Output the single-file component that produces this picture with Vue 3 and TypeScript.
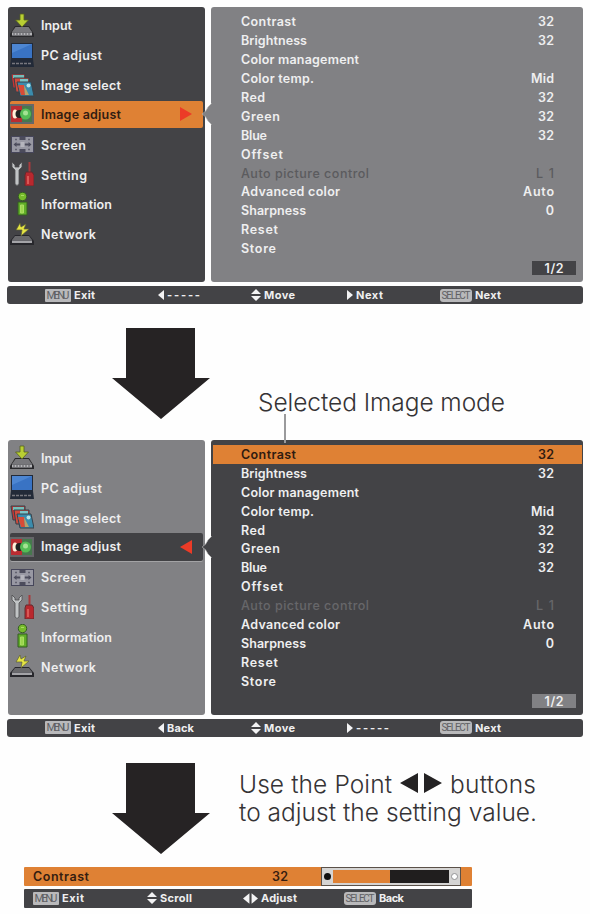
<script setup lang="ts">
import type { Directive } from 'vue'

interface MenuItem { id: string; label: string; width: number }
interface Setting { label: string; width: number; value?: string; valueWidth?: number; dim?: boolean }
interface Hint { keys: 'menu' | 'select' | 'left' | 'right' | 'updown' | 'leftright'; label: string; width: number }
interface Osd { id: string; activeSide: 'menu' | 'settings'; hints: Hint[] }

// Spreads a label's letters so that it fills its nominal width.
const fit = (el: HTMLElement, width: number) => {
  const count = (el.textContent ?? '').length
  el.style.letterSpacing = '0px'
  const natural = el.getBoundingClientRect().width
  const gap = (width - natural) / Math.max(count - 1, 1)
  el.style.letterSpacing = `${gap}px`
  el.style.marginRight = `${-gap}px`
}
const vFit: Directive<HTMLElement, number> = {
  mounted: (el, { value }) => fit(el, value),
}

const menu: MenuItem[] = [
  { id: 'input', label: 'Input', width: 31 },
  { id: 'pc', label: 'PC adjust', width: 61 },
  { id: 'select', label: 'Image select', width: 80 },
  { id: 'adjust', label: 'Image adjust', width: 80 },
  { id: 'screen', label: 'Screen', width: 45 },
  { id: 'setting', label: 'Setting', width: 46 },
  { id: 'info', label: 'Information', width: 71 },
  { id: 'network', label: 'Network', width: 55 },
]

const settings: Setting[] = [
  { label: 'Contrast', width: 55, value: '32', valueWidth: 16 },
  { label: 'Brightness', width: 66, value: '32', valueWidth: 16 },
  { label: 'Color management', width: 118 },
  { label: 'Color temp.', width: 73, value: 'Mid', valueWidth: 23 },
  { label: 'Red', width: 24, value: '32', valueWidth: 16 },
  { label: 'Green', width: 39, value: '32', valueWidth: 16 },
  { label: 'Blue', width: 26, value: '32', valueWidth: 16 },
  { label: 'Offset', width: 42 },
  { label: 'Auto picture control', width: 128, value: 'L 1', valueWidth: 18, dim: true },
  { label: 'Advanced color', width: 99, value: 'Auto', valueWidth: 31 },
  { label: 'Sharpness', width: 65, value: '0', valueWidth: 8 },
  { label: 'Reset', width: 37 },
  { label: 'Store', width: 35 },
]

const screens: Osd[] = [
  {
    id: 'first',
    activeSide: 'menu',
    hints: [
      { keys: 'menu', label: 'Exit', width: 21 },
      { keys: 'left', label: '-----', width: 33 },
      { keys: 'updown', label: 'Move', width: 31 },
      { keys: 'right', label: 'Next', width: 27 },
      { keys: 'select', label: 'Next', width: 26 },
    ],
  },
  {
    id: 'second',
    activeSide: 'settings',
    hints: [
      { keys: 'menu', label: 'Exit', width: 21 },
      { keys: 'left', label: 'Back', width: 27 },
      { keys: 'updown', label: 'Move', width: 31 },
      { keys: 'right', label: '-----', width: 33 },
      { keys: 'select', label: 'Next', width: 26 },
    ],
  },
]

const adjustHints: Hint[] = [
  { keys: 'menu', label: 'Exit', width: 22 },
  { keys: 'updown', label: 'Scroll', width: 32 },
  { keys: 'leftright', label: 'Adjust', width: 36 },
  { keys: 'select', label: 'Back', width: 25 },
]

const level = 49
</script>

<template>
  <main class="page">
    <template v-for="screen in screens" :key="screen.id">
      <section class="osd" :class="`on-${screen.activeSide}`">
        <div class="panes">
          <nav class="menu">
            <div v-for="item in menu" :key="item.id" class="entry" :class="{ active: item.id === 'adjust' }">
              <svg class="icon" viewBox="0 0 24 24">
                <g v-if="item.id === 'input'">
                  <path d="M5 13h14l5 8v3H0v-3z" fill="#29292c" />
                  <path d="M5.500 14h13l3.500 5H2z" fill="#77777b" />
                  <path d="M2 19.500h20v3H2z" fill="#b5b5b8" />
                  <path d="M3 21h18" stroke="#77777b" stroke-width="1.500" stroke-dasharray="2 1" />
                  <path d="M10 1h4v6h4.500L12 14 5.500 7H10z" fill="#b9cf33" stroke="#546020" stroke-width=".8" />
                </g>
                <g v-else-if="item.id === 'pc'">
                  <path d="M1 0h22v16l1 8H0l1-8z" fill="#222a38" />
                  <path d="M2 1h20v14H2z" fill="#4d86d2" />
                  <path d="M2 10L22 1v14H2z" fill="#3973c4" />
                  <path d="M2 20.500h20" stroke="#77777e" stroke-width="1.500" stroke-dasharray="3 1" />
                </g>
                <g v-else-if="item.id === 'select'">
                  <path d="M1 1h14v14H3z" fill="#c83332" stroke="#37424b" />
                  <path d="M3 2h11v3H3z" fill="#75bdb8" />
                  <path d="M4 5h15v14H6z" fill="#cf4b3c" stroke="#37424b" />
                  <path d="M10 6h8v4h-8z" fill="#7bc5c8" />
                  <path d="M7 9h14l3 14H10z" fill="#3b8cad" stroke="#37424b" />
                  <path d="M8 12h6l1 10h-4z" fill="#d84b36" />
                  <path d="M14 12l5 10h-4z" fill="#b5a36b" />
                  <circle cx="18.500" cy="12.500" r="2" fill="#b6e3e7" />
                </g>
                <g v-else-if="item.id === 'adjust'">
                  <path d="M0 2h24v20H0z" fill="#656769" />
                  <path d="M1 4h11v16H1z" fill="#ba2d32" />
                  <path d="M12 4h10v16H12z" fill="#47784e" />
                  <ellipse cx="5" cy="12" rx="2.500" ry="4.500" fill="#fff0d9" />
                  <circle cx="9.500" cy="12" r="4" fill="#202322" />
                  <circle cx="15.500" cy="12" r="5.500" fill="#54bd55" />
                  <circle cx="15.500" cy="11" r="2.500" fill="#a3e293" />
                </g>
                <g v-else-if="item.id === 'screen'">
                  <path d="M1 4h23v17H1z" fill="#46465a" />
                  <path d="M2 5h21v15H2z" fill="#9898a3" />
                  <path d="M9.500 5h6v3h-6zM9.500 17h6v3h-6z" fill="#4c4c5c" />
                  <path d="M3.500 12.500l3-2.500v1.500h4v2h-4V15zM21.500 12.500l-3-2.500v1.500h-4v2h4V15z" fill="#4c4c5c" />
                  <path d="M5 7.500h2M18 7.500h2M5 17.500h2M18 17.500h2" stroke="#62626f" stroke-width="1.500" />
                  <path d="M10.500 10h4v5h-4z" fill="#b5b5bd" />
                </g>
                <g v-else-if="item.id === 'setting'">
                  <path d="M2 0v5l3 3v14q2 3 4 0V8l3-3V0L9 3v2H5V3z" fill="#c1c4c5" stroke="#4b4c4e" stroke-width=".8" />
                  <path d="M18.500 0h2v10h-2z" fill="#a83a3c" />
                  <path d="M16 10h6l2 3v11h-9V13z" fill="#b9282e" stroke="#642b2f" />
                  <path d="M18 14v8" stroke="#e36a64" stroke-width="1.500" />
                </g>
                <g v-else-if="item.id === 'info'">
                  <circle cx="12.500" cy="4.500" r="4.200" fill="#77bb2c" stroke="#345c23" />
                  <path d="M8 10h9v13H8z" fill="#61ad28" stroke="#345c23" />
                  <path d="M11 3.500h3M10.500 13h3v8h-3z" stroke="#a9dc62" fill="#9ad64c" />
                </g>
                <g v-else>
                  <path d="M5 13h14l5 6v4H0v-4z" fill="#27272c" />
                  <path d="M5 14h14l3 4H2z" fill="#69696c" />
                  <path d="M2 18.500h20v2.500H2z" fill="#a3a3a7" />
                  <path d="M10 1L6 8h6l-1 6 8-7h-5l2-5-5 3z" fill="#e5e443" stroke="#5b6033" stroke-width=".7" />
                </g>
              </svg>
              <span v-fit="item.width">{{ item.label }}</span>
              <svg v-if="item.id === 'adjust'" class="cursor" viewBox="0 0 12 14">
                <path :d="screen.activeSide === 'menu' ? 'M0 0L12 7L0 14z' : 'M12 0L0 7L12 14z'" />
              </svg>
            </div>
          </nav>
          <div class="settings">
            <svg class="notch" viewBox="0 0 11 24"><path d="M11 1L7 5Q5 10 1 12Q5 14 7 19L11 23" /></svg>
            <div
              v-for="(row, i) in settings"
              :key="row.label"
              class="row"
              :class="{ dim: row.dim, selected: i === 0 && screen.activeSide === 'settings' }"
            >
              <span v-fit="row.width">{{ row.label }}</span>
              <span v-if="row.value" v-fit="row.valueWidth">{{ row.value }}</span>
            </div>
            <div class="pages"><span v-fit="19">1/2</span></div>
          </div>
          <i v-if="screen.id === 'second'" class="leader"></i>
        </div>
        <footer class="hints">
          <div v-for="(hint, i) in screen.hints" :key="i" class="hint">
            <span v-if="hint.keys === 'menu'" class="key"><b v-fit="23">MENU</b></span>
            <span v-else-if="hint.keys === 'select'" class="key wide"><b v-fit="29">SELECT</b></span>
            <svg v-else-if="hint.keys === 'updown'" class="updown" viewBox="0 0 10 12"><path d="M5 0l5 5H0zM5 12l5-5H0z" /></svg>
            <svg v-else class="side" viewBox="0 0 6 10"><path :d="hint.keys === 'left' ? 'M6 0L0 5L6 10z' : 'M0 0L6 5L0 10z'" /></svg>
            <span v-fit="hint.width">{{ hint.label }}</span>
          </div>
        </footer>
      </section>

      <div class="step" :class="screen.id">
        <svg class="down" viewBox="0 0 98 91"><path d="M14 0H83V50H98L49 91L0 50H14z" /></svg>
        <p v-if="screen.id === 'first'" class="note"><span v-fit="247">Selected Image mode</span></p>
        <p v-else class="note">
          <span class="line">
            <span v-fit="153">Use the Point</span>
            <svg class="points" viewBox="0 0 42 20"><path d="M18 0V20L0 10zM24 0V20L42 10z" /></svg>
            <span v-fit="86">buttons</span>
          </span>
          <span class="line"><span v-fit="298">to adjust the setting value.</span></span>
        </p>
      </div>
    </template>

    <section class="adjuster">
      <div class="bar">
        <span class="name"><span v-fit="56">Contrast</span></span>
        <span class="amount"><span v-fit="16">32</span></span>
        <div class="slider">
          <span class="end"><i class="dot"></i></span>
          <div class="track"><div class="fill" :style="{ width: level + '%' }"></div></div>
          <span class="end"><i class="dot light"></i></span>
        </div>
      </div>
      <footer class="hints">
        <div v-for="hint in adjustHints" :key="hint.keys" class="hint">
          <span v-if="hint.keys === 'menu'" class="key"><b v-fit="23">MENU</b></span>
          <span v-else-if="hint.keys === 'select'" class="key wide"><b v-fit="29">SELECT</b></span>
          <svg v-else-if="hint.keys === 'updown'" class="updown" viewBox="0 0 10 12"><path d="M5 0l5 5H0zM5 12l5-5H0z" /></svg>
          <svg v-else class="both" viewBox="0 0 14 10"><path d="M6 0L0 5L6 10zM8 0l6 5l-6 5z" /></svg>
          <span v-fit="hint.width">{{ hint.label }}</span>
        </div>
      </footer>
    </section>
  </main>
</template>

<style>
body { background: #fefefe; }
</style>

<style scoped>
.page {
  box-sizing: border-box;
  width: 590px;
  height: 914px;
  padding: 7px 7px 0;
  overflow: hidden;
  font-family: Inter, Roboto, "Liberation Sans", sans-serif;
  color: #efeff0;
}
span, b { white-space: nowrap; }
svg { display: block; flex: none; }
.osd { height: 297px; font-size: 12.500px; font-weight: 600; }
.panes {
  position: relative;
  display: grid;
  grid-template-columns: 197px 372px;
  column-gap: 6px;
  height: 275px;
  padding-left: 1px;
}
.menu, .settings { box-sizing: border-box; border-radius: 3px; background: #434346; }
.menu { padding: 4px 2px; }
.on-menu .settings, .on-settings .menu { background: #818184; }
.entry { display: flex; align-items: center; gap: 7px; height: 29.85px; }
.icon { width: 24px; height: 24px; margin-top: -2px; }
.entry.active { height: 27.85px; margin: 0 0 2px; border-radius: 2px; background: #df8134; color: #321d12; }
.on-settings .entry.active { background: #414144; color: #efeff0; box-shadow: 0 1px 0 #a3a3a5; }
.entry.active .icon { margin-top: 0; }
.cursor { width: 12px; height: 14px; margin-left: auto; margin-right: 11px; fill: #ec3b27; }
.settings { position: relative; padding: 5.500px 1px 0 2px; }
.notch { position: absolute; top: 95px; left: -10px; width: 11px; height: 24px; fill: #818184; stroke: #b5b5b5; stroke-width: .6; }
.on-settings .notch { fill: #434346; }
.row {
  display: flex;
  align-items: center;
  justify-content: space-between;
  height: 18.9px;
  padding: 0 28px 0 28px;
}
.row.dim { color: #5b5b5e; font-weight: 500; }
.on-settings .row.dim { color: #67676a; }
.row.selected { background: #df8134; color: #301b10; }
.pages {
  display: grid;
  place-items: center;
  width: 44px;
  height: 14px;
  margin: 3px 6px 0 auto;
  background: #434346;
}
.on-settings .pages { background: #818184; }
.leader { position: absolute; top: -26px; left: 277px; width: 2px; height: 29px; background: #9a9a9c; }
.hints {
  display: grid;
  grid-template-columns: 113px 93px 96px 93px 1fr;
  align-items: center;
  height: 18px;
  margin-top: 4px;
  padding-left: 38px;
  border-radius: 3px;
  background: #434346;
  font-size: 11px;
  font-weight: 700;
}
.hint { display: flex; align-items: center; gap: 3px; }
.hint svg { fill: #f3f3f4; }
.updown { width: 10px; height: 12px; }
.side { width: 6px; height: 10px; }
.both { width: 15px; height: 11px; }
.key {
  display: grid;
  place-items: center;
  width: 26px;
  height: 13px;
  border-radius: 1px;
  background: #b9b9bb;
  color: #606064;
  font-family: Roboto, "Liberation Sans", sans-serif;
  font-size: 11px;
  line-height: 13px;
}
.key b { font-weight: 400; }
.key.wide { width: 32px; border-radius: 3px; font-size: 10px; }
.step { display: flex; padding: 24px 0 0 105px; height: 111.5px; }
.step.second { padding-top: 26px; height: 104px; }
.down { width: 98px; height: 91px; fill: #262324; }
.note { margin: 58px 0 0 48px; color: #353335; font-size: 24.500px; font-weight: 300; line-height: 32px; }
.step.second .note { margin: 7px 0 0 29px; line-height: 28.500px; }
.line { display: flex; align-items: center; gap: 8px; height: 28.500px; }
.points { width: 42px; height: 20px; margin-top: -1px; fill: #242223; }
.adjuster { width: 448px; margin-left: 17px; }
.bar {
  display: flex;
  align-items: center;
  height: 19px;
  border-radius: 1px;
  background: #df8134;
  color: #361d10;
  font-size: 12.500px;
  font-weight: 600;
}
.name { width: 239px; padding-left: 9px; }
.amount { width: 49px; }
.slider {
  display: flex;
  align-items: center;
  box-sizing: border-box;
  width: 140px;
  height: 19px;
  border: 1px solid #5b5149;
  background: #d5d4d3;
}
.end { display: grid; place-items: center; width: 11px; }
.dot { box-sizing: border-box; width: 7px; height: 7px; border-radius: 50%; background: #111; }
.dot.light { background: #fff; border: 1px solid #929294; }
.track { flex: 1; height: 13px; background: #201e1e; }
.fill { height: 100%; background: #df8134; }
.adjuster .hints {
  grid-template-columns: 114px 96px 101px 1fr;
  height: 19px;
  margin-top: 3px;
  padding-left: 9px;
  border-radius: 1px;
}
</style>
